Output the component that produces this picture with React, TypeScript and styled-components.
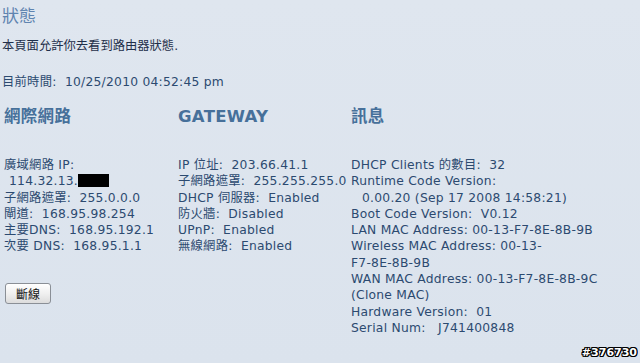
import React from "react";
import styled, { createGlobalStyle } from "styled-components";

const Global = createGlobalStyle`
  html, body { margin: 0; padding: 0; }
  body {
    width: 640px; height: 363px; overflow: hidden;
    background: linear-gradient(180deg, #dfe6ef 0%, #dbe3ed 100%);
    font-family: "DejaVu Sans", Verdana, "Noto Sans CJK TC", sans-serif;
    color: #2c4a70;
  }
`;

const Page = styled.div`
  position: relative;
  width: 640px;
  height: 363px;
  padding: 6px 0 0 2px;
  box-sizing: border-box;
  font-size: 12.3px;
  letter-spacing: 0.25px;
`;

const Title = styled.h1`
  margin: 0;
  font-size: 17px;
  font-weight: normal;
  line-height: 20px;
  color: #5f84b0;
  letter-spacing: 0;
`;

const Para = styled.p`
  margin: 12px 0 0 0;
  line-height: 16px;
  color: #1f2f4a;
  letter-spacing: 0;
`;

const Time = styled.p`
  margin: 20px 0 0 0;
  line-height: 16px;
  color: #2c4a70;
`;

const Columns = styled.div`
  display: grid;
  grid-template-columns: 174px 173px 1fr;
  margin-top: 17px;
  padding-left: 2px;
`;

const Column = styled.div`
  display: flex;
  flex-direction: column;
`;

const Heading = styled.h2`
  margin: 0 0 30px 0;
  font-size: 16.5px;
  font-weight: bold;
  line-height: 20px;
  color: #46709a;
  letter-spacing: 0.3px;
`;

const Line = styled.div<{ $indent?: number }>`
  line-height: 16.3px;
  white-space: nowrap;
  padding-left: ${(p) => p.$indent ?? 0}px;
`;

const Masked = styled.span`
  display: inline-block;
  width: 31px;
  height: 13px;
  background: #000;
  vertical-align: -2px;
`;

const Button = styled.button`
  margin-top: 28px;
  align-self: flex-start;
  width: 46px;
  height: 21px;
  padding: 0;
  margin-left: 1px;
  border: 1px solid #8a8f96;
  border-radius: 3px;
  background: linear-gradient(180deg, #ffffff 0%, #f0f0f0 50%, #dcdcdc 100%);
  font-family: "Noto Sans CJK TC", sans-serif;
  font-size: 12px;
  color: #111;
`;

const Watermark = styled.div`
  position: absolute;
  right: 3px;
  bottom: 4px;
  font-family: "DejaVu Sans", sans-serif;
  font-weight: bold;
  font-size: 11px;
  color: #fff;
  letter-spacing: 0;
  text-shadow: -1px 0 #000, 1px 0 #000, 0 -1px #000, 0 1px #000,
    -1px -1px #000, 1px 1px #000, -1px 1px #000, 1px -1px #000;
`;

export default function App() {
  return (
    <>
      <Global />
      <Page>
        <Title>狀態</Title>
        <Para>本頁面允許你去看到路由器狀態.</Para>
        <Time>目前時間:&nbsp; 10/25/2010 04:52:45 pm</Time>
        <Columns>
          <Column>
            <Heading>網際網路</Heading>
            <Line>廣域網路 IP:</Line>
            <Line $indent={5}>114.32.13.<Masked /></Line>
            <Line>子網路遮罩:&nbsp; 255.0.0.0</Line>
            <Line>閘道:&nbsp; 168.95.98.254</Line>
            <Line>主要DNS:&nbsp; 168.95.192.1</Line>
            <Line>次要 DNS:&nbsp; 168.95.1.1</Line>
            <Button>斷線</Button>
          </Column>
          <Column>
            <Heading>GATEWAY</Heading>
            <Line>IP 位址:&nbsp; 203.66.41.1</Line>
            <Line>子網路遮罩:&nbsp; 255.255.255.0</Line>
            <Line>DHCP 伺服器:&nbsp; Enabled</Line>
            <Line>防火牆:&nbsp; Disabled</Line>
            <Line>UPnP:&nbsp; Enabled</Line>
            <Line>無線網路:&nbsp; Enabled</Line>
          </Column>
          <Column>
            <Heading>訊息</Heading>
            <Line>DHCP Clients 的數目:&nbsp; 32</Line>
            <Line>Runtime Code Version:</Line>
            <Line $indent={11}>0.00.20 (Sep 17 2008 14:58:21)</Line>
            <Line>Boot Code Version:&nbsp; V0.12</Line>
            <Line>LAN MAC Address: 00-13-F7-8E-8B-9B</Line>
            <Line>Wireless MAC Address: 00-13-</Line>
            <Line>F7-8E-8B-9B</Line>
            <Line>WAN MAC Address: 00-13-F7-8E-8B-9C</Line>
            <Line>(Clone MAC)</Line>
            <Line>Hardware Version:&nbsp; 01</Line>
            <Line>Serial Num:&nbsp;&nbsp; J741400848</Line>
          </Column>
        </Columns>
        <Watermark>#376730</Watermark>
      </Page>
    </>
  );
}
